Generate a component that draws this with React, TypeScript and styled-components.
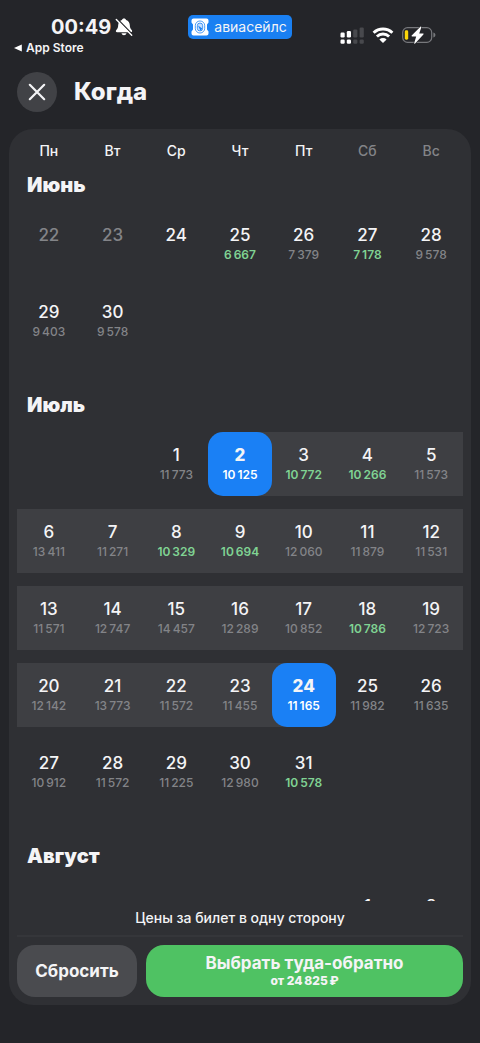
import React from 'react';
import styled, { createGlobalStyle, css } from 'styled-components';

const GlobalStyle = createGlobalStyle`
  * { box-sizing: border-box; }
  body {
    margin: 0;
    background: #242529;
    color: #f4f4f6;
    font-family: Inter, "Liberation Sans", sans-serif;
    -webkit-font-smoothing: antialiased;
  }
  button { font: inherit; color: inherit; border: 0; padding: 0; cursor: pointer; }
`;

const Screen = styled.main`
  display: flex;
  flex-direction: column;
  height: 100vh;
  padding-bottom: 38px;
`;

const StatusBar = styled.div`
  display: grid;
  grid-template-columns: 1fr auto 1fr;
  align-items: start;
  height: 72px;
  padding-top: 15px;
`;

const StatusLeft = styled.div`
  display: flex;
  flex-direction: column;
  padding-left: 14px;
`;

const Clock = styled.div`
  display: flex;
  align-items: center;
  gap: 4px;
  padding-left: 37px;
  font-size: 20px;
  line-height: 24px;
  font-weight: 700;
`;

const BackLink = styled.a`
  display: flex;
  align-items: center;
  gap: 4px;
  font-size: 12px;
  line-height: 18px;
  font-weight: 600;
  color: inherit;
  text-decoration: none;
`;

const Brand = styled.div`
  display: flex;
  align-items: center;
  gap: 5px;
  height: 24px;
  padding: 0 5px 1px 3px;
  border-radius: 5px;
  background: #1a80f2;
  font-size: 14px;
  line-height: 20px;
  font-weight: 400;
`;

const StatusRight = styled.div`
  display: flex;
  justify-content: flex-end;
  align-items: center;
  gap: 8px;
  padding: 11px 44px 0 0;
`;

const Header = styled.header`
  display: flex;
  align-items: center;
  gap: 17px;
  height: 57px;
  padding: 0 17px 18px;
`;

const CloseButton = styled.button`
  display: grid;
  place-items: center;
  width: 40px;
  height: 40px;
  border-radius: 50%;
  background: #414246;
`;

const Title = styled.h1`
  margin: 0;
  font-size: 24px;
  line-height: 32px;
  font-weight: 800;
`;

const Card = styled.section`
  display: flex;
  flex-direction: column;
  flex: 1;
  min-height: 0;
  margin: 0 9px;
  padding: 0 8px 8px;
  border-radius: 24px;
  background: #2f3034;
`;

const Weekdays = styled.div`
  display: grid;
  grid-template-columns: repeat(7, 1fr);
  padding: 12px 0 10px;
  text-align: center;
  font-size: 14px;
  line-height: 20px;
  font-weight: 500;
`;

const Weekday = styled.span<{ $off?: boolean }>`
  color: ${p => (p.$off ? '#838488' : '#f4f4f6')};
`;

const Scroller = styled.div`
  flex: 1;
  min-height: 0;
  overflow-y: auto;
  scrollbar-width: none;
`;

const Month = styled.section`
  padding-bottom: 38px;
`;

const MonthName = styled.h2`
  margin: 0 0 13px;
  padding-left: 10px;
  font-size: 20px;
  line-height: 28px;
  font-weight: 900;
`;

const Weeks = styled.div`
  display: grid;
  grid-template-columns: repeat(7, 1fr);
  grid-auto-rows: 64px;
  row-gap: 13px;
`;

type Range = 'start' | 'mid' | 'end' | undefined;
const band = '#3e3f43';

const Cell = styled.div<{ $col?: number; $range: Range }>`
  display: grid;
  ${p => p.$col && css`grid-column-start: ${p.$col};`}
  ${p => p.$range === 'mid' && css`background: ${band};`}
  ${p => p.$range === 'start' && css`background: linear-gradient(to right, transparent 50%, ${band} 50%);`}
  ${p => p.$range === 'end' && css`background: linear-gradient(to left, transparent 50%, ${band} 50%);`}
`;

const Day = styled.button<{ $selected: boolean }>`
  display: flex;
  flex-direction: column;
  align-items: center;
  padding-top: 11px;
  border-radius: 15px;
  background: ${p => (p.$selected ? '#1a80f5' : 'transparent')};
  font-weight: ${p => (p.$selected ? 800 : 500)};
  &:disabled { color: #838488; cursor: default; }
`;

const Num = styled.span`
  font-size: 17px;
  line-height: 24px;
`;

const Price = styled.span<{ $tone: 'plain' | 'cheap' | 'selected' }>`
  font-size: 12px;
  line-height: 16px;
  font-weight: ${p => (p.$tone === 'plain' ? 500 : 600)};
  color: ${p => ({ plain: '#838488', cheap: '#80d393', selected: '#fff' })[p.$tone]};
`;

const Note = styled.p`
  margin: 0;
  text-align: center;
  font-size: 14px;
  line-height: 34px;
  font-weight: 500;
`;

const Actions = styled.div`
  display: grid;
  grid-template-columns: 120px 1fr;
  gap: 9px;
  padding-top: 8px;
  border-top: 2px solid #35363a;
`;

const Action = styled.button<{ $primary?: boolean }>`
  display: flex;
  flex-direction: column;
  align-items: center;
  justify-content: center;
  height: 52px;
  border-radius: 18px;
  background: ${p => (p.$primary ? '#4fc263' : '#4a4b4f')};
  font-size: 17px;
  line-height: 20px;
  font-weight: 700;
`;

const ActionPrice = styled.small`
  font-size: 12px;
  line-height: 16px;
  font-weight: 800;
`;

type DayData = { day: number; price?: number; cheap?: boolean; past?: boolean; range?: Range };
type MonthData = { name: string; firstCol: number; days: DayData[] };

const build = (from: number, prices: (number | undefined)[], cheap: number[]): DayData[] =>
  prices.map((price, i) => ({ day: from + i, price, cheap: cheap.includes(from + i) }));

const june = build(22, [undefined, undefined, undefined, 6667, 7379, 7178, 9578, 9403, 9578], [25, 27])
  .map(d => ({ ...d, past: d.day < 24 }));

const july = build(1, [
  11773, 10125, 10772, 10266, 11573,
  13411, 11271, 10329, 10694, 12060, 11879, 11531,
  11571, 12747, 14457, 12289, 10852, 10786, 12723,
  12142, 13773, 11572, 11455, 11165, 11982, 11635,
  10912, 11572, 11225, 12980, 10578,
], [3, 4, 8, 9, 18, 31]).map(d => ({
  ...d,
  range: (d.day === 2 ? 'start' : d.day === 24 ? 'end' : d.day > 2 && d.day < 24 ? 'mid' : undefined) as Range,
}));

const months: MonthData[] = [
  { name: 'Июнь', firstCol: 1, days: june },
  { name: 'Июль', firstCol: 3, days: july },
  { name: 'Август', firstCol: 6, days: build(1, [undefined, undefined], []) },
];

const weekdays = ['Пн', 'Вт', 'Ср', 'Чт', 'Пт', 'Сб', 'Вс'];

const formatPrice = (n: number) => String(n).replace(/(\d{3})$/, '\u2009$1');

const BellOff = () => (
  <svg width="18" height="20" viewBox="0 0 18 20" aria-hidden="true">
    <path d="M9 1.500c-1.100 0-1.900.7-2.100 1.600C4.500 4 3.300 5.900 3.200 8c-.1 2.800-.6 3.700-1.900 4.900-.8.700-.5 2.300.8 2.300h13.800c1.300 0 1.600-1.600.8-2.300-1.300-1.200-1.800-2.100-1.900-4.900-.1-2.100-1.300-4-3.700-4.900C10.900 2.200 10.100 1.500 9 1.500zM6.500 16.200c.3 1.300 1.300 2 2.500 2s2.200-.7 2.500-2z" fill="#fff" />
    <path d="M2.200 1.800 17.200 17.300" stroke="#242529" strokeWidth="1.400" />
    <path d="M1.300 2.600 16.700 18.300" stroke="#fff" strokeWidth="1.400" strokeLinecap="round" />
  </svg>
);

const BackArrow = () => (
  <svg width="8" height="8" viewBox="0 0 8 8" aria-hidden="true">
    <path d="M0 4 7.800.4v7.200z" fill="#fff" />
  </svg>
);

const BrandMark = () => (
  <svg width="18" height="18" viewBox="0 0 18 18" aria-hidden="true">
    <path d="M2.500.5h13a2 2 0 0 1 2 2v2l-1.500 2v5l1.500 2v2a2 2 0 0 1-2 2h-13a2 2 0 0 1-2-2v-2l1.500-2v-5l-1.500-2v-2a2 2 0 0 1 2-2z" fill="#fff" />
    <rect x="4.300" y="3" width="9.400" height="12" rx="4.600" fill="none" stroke="#1a80f2" strokeWidth="0.800" />
    <rect x="6.300" y="5" width="5.400" height="8" rx="2.700" fill="#c5dfff" stroke="#1a80f2" strokeWidth="0.800" />
    <path d="M7 7.500 11.300 10.500 9.500 12.800z" fill="#1a80f2" />
  </svg>
);

const Signal = () => (
  <svg width="24" height="17" viewBox="0 0 24 17" aria-hidden="true">
    <g fill="#fff">
      <rect x="0.500" y="5.500" width="4.200" height="5" rx="1.200" />
      <rect x="6.800" y="4" width="4.200" height="6.500" rx="1.200" />
      <rect x="0.500" y="12.500" width="4.200" height="4.200" rx="1.200" />
      <rect x="6.800" y="12.500" width="4.200" height="4.200" rx="1.200" />
    </g>
    <g fill="#48494d">
      <rect x="13.200" y="2.500" width="4.200" height="8" rx="1.200" />
      <rect x="19.600" y="0.500" width="4.200" height="10" rx="1.200" />
      <rect x="13.200" y="12.500" width="4.200" height="4.200" rx="1.200" />
      <rect x="19.600" y="12.500" width="4.200" height="4.200" rx="1.200" />
    </g>
  </svg>
);

const Wifi = () => (
  <svg width="22" height="16" viewBox="0 0 22 16" aria-hidden="true">
    <g fill="none" stroke="#fff" strokeWidth="2.900">
      <path d="M1.600 5.800a13.500 13.500 0 0 1 18.800 0" />
      <path d="M4.900 9.500a8.800 8.800 0 0 1 12.200 0" />
    </g>
    <path d="M7.400 12.400a5.100 5.100 0 0 1 7.200 0L11 16z" fill="#fff" />
  </svg>
);

const Battery = () => (
  <svg width="34" height="18" viewBox="0 0 34 18" aria-hidden="true">
    <rect x="0.700" y="1.700" width="29" height="14.600" rx="4.800" fill="none" stroke="#77787c" strokeWidth="1.200" />
    <path d="M31.400 6.500c1.400.5 2 1.400 2 2.500s-.6 2-2 2.500z" fill="#77787c" />
    <rect x="2.800" y="4.300" width="3.400" height="9.400" rx="1.400" fill="#fbd60a" />
    <path d="M18.400.8 9.700 9.600c-.4.4-.2.900.4.900h4.100l-2 6.400c-.2.700.4 1 .9.500l8.300-9c.4-.4.2-.9-.4-.9h-3.800l2.100-6.100c.2-.7-.5-1-.9-.6z" fill="#fff" stroke="#242529" strokeWidth="1.200" paintOrder="stroke" />
  </svg>
);

const Cross = () => (
  <svg width="18" height="18" viewBox="0 0 18 18" aria-hidden="true">
    <path d="M1.800 1.800 16.200 16.200M16.200 1.800 1.800 16.200" stroke="#f4f4f6" strokeWidth="2.200" strokeLinecap="round" />
  </svg>
);

export default function App() {
  return (
    <>
      <GlobalStyle />
      <Screen>
        <StatusBar>
          <StatusLeft>
            <Clock>00:49<BellOff /></Clock>
            <BackLink href="#"><BackArrow />App Store</BackLink>
          </StatusLeft>
          <Brand><BrandMark />авиасейлс</Brand>
          <StatusRight><Signal /><Wifi /><Battery /></StatusRight>
        </StatusBar>
        <Header>
          <CloseButton aria-label="Закрыть"><Cross /></CloseButton>
          <Title>Когда</Title>
        </Header>
        <Card>
          <Weekdays>
            {weekdays.map((w, i) => <Weekday key={w} $off={i > 4}>{w}</Weekday>)}
          </Weekdays>
          <Scroller>
            {months.map(m => (
              <Month key={m.name}>
                <MonthName>{m.name}</MonthName>
                <Weeks>
                  {m.days.map((d, i) => {
                    const selected = d.range === 'start' || d.range === 'end';
                    return (
                      <Cell key={d.day} $col={i === 0 ? m.firstCol : undefined} $range={d.range}>
                        <Day $selected={selected} aria-pressed={selected} disabled={d.past}>
                          <Num>{d.day}</Num>
                          {d.price && (
                            <Price $tone={selected ? 'selected' : d.cheap ? 'cheap' : 'plain'}>
                              {formatPrice(d.price)}
                            </Price>
                          )}
                        </Day>
                      </Cell>
                    );
                  })}
                </Weeks>
              </Month>
            ))}
          </Scroller>
          <Note>Цены за билет в одну сторону</Note>
          <Actions>
            <Action>Сбросить</Action>
            <Action $primary>
              Выбрать туда-обратно
              <ActionPrice>от {formatPrice(24825)}{'\u2009'}₽</ActionPrice>
            </Action>
          </Actions>
        </Card>
      </Screen>
    </>
  );
}
